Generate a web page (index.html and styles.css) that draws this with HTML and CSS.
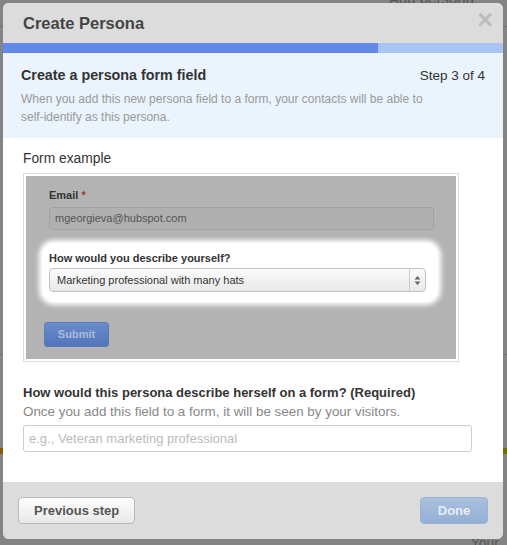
FILE: index.html
```html
<!DOCTYPE html>
<html>
<head>
  <title>Create Persona</title>
  <link rel="stylesheet" href="styles.css">
</head>
<body>

  <div class="backdrop">
    <div class="bg-link">Add persona</div>
    <div class="bg-line line-top"></div>
    <div class="bg-line line-mid"></div>
    <div class="bg-stripe"></div>
    <div class="bg-foot">Your</div>
  </div>

  <div class="modal">
    <div class="modal-header">
      <h2>Create Persona</h2>
      <span class="close">&times;</span>
    </div>

    <div class="progress">
      <div class="progress-fill" style="width: 75%"></div>
    </div>

    <div class="intro">
      <div class="intro-top">
        <h3>Create a persona form field</h3>
        <span class="step">Step 3 of 4</span>
      </div>
      <p>When you add this new persona field to a form, your contacts will be able to <span class="nowrap">self-identify</span> as this persona.</p>
    </div>

    <div class="modal-body">
      <div class="section-label">Form example</div>

      <div class="preview">
        <div class="preview-inner">
          <div class="pv-label">Email <span class="req">*</span></div>
          <div class="pv-input">mgeorgieva@hubspot.com</div>

          <div class="highlight">
            <div class="pv-label">How would you describe yourself?</div>
            <div class="pv-select">
              <span>Marketing professional with many hats</span>
              <span class="arrows">
                <svg width="7" height="11" viewBox="0 0 7 11">
                  <path d="M3.5 1 L6.5 4.5 L0.5 4.5 Z" fill="#666"/>
                  <path d="M3.5 10 L6.5 6.5 L0.5 6.5 Z" fill="#666"/>
                </svg>
              </span>
            </div>
          </div>

          <div class="pv-submit">Submit</div>
        </div>
      </div>

      <div class="question">How would this persona describe herself on a form? (Required)</div>
      <div class="hint">Once you add this field to a form, it will be seen by your visitors.</div>
      <input type="text" class="text-input" placeholder="e.g., Veteran marketing professional">
    </div>

    <div class="modal-footer">
      <button class="btn">Previous step</button>
      <button class="btn btn-done">Done</button>
    </div>
  </div>

</body>
</html>
```

FILE: styles.css
```css
body {
  margin: 0;
  font-family: "Liberation Sans", Arial, sans-serif;
  background: #848484;
  height: 545px;
  overflow: hidden;
  position: relative;
}

/* dimmed page behind the dialog */
.backdrop {
  position: absolute;
  inset: 0;
}

.bg-link {
  position: absolute;
  right: 33px;
  top: -10px;
  font-size: 15px;
  color: #555;
}

.bg-line {
  position: absolute;
  left: 0;
  right: 0;
  height: 1px;
  background: #6f6f6f;
}

.line-top { top: 26px; }
.line-mid { top: 354px; }

.bg-stripe {
  position: absolute;
  left: 0;
  right: 0;
  top: 448px;
  height: 6px;
  background: linear-gradient(to right, #8a5a00 0 50%, #6b7000 50%);
}

.bg-foot {
  position: absolute;
  right: 8px;
  bottom: -6px;
  font-size: 14px;
  color: #555;
}

.modal {
  position: absolute;
  left: 3px;
  top: 3px;
  width: 500px;
  height: 536px;
  background: #fff;
  border-radius: 6px;
  overflow: hidden;
  display: flex;
  flex-direction: column;
}

.modal-header {
  background: #dcdcdc;
  height: 40px;
  display: flex;
  align-items: center;
  justify-content: space-between;
  padding: 0 10px 0 20px;
}

.modal-header h2 {
  margin: 0;
  font-size: 16.5px;
  color: #444;
  font-weight: bold;
}

.close {
  font-size: 27px;
  font-weight: bold;
  color: #bdbdbd;
  line-height: 1;
  margin-top: -5px;
}

.progress {
  height: 10px;
  background: #a9c4f2;
}

.progress-fill {
  height: 100%;
  background: #6389e8;
}

.intro {
  background: #ebf3fc;
  height: 85px;
  padding: 14px 18px 0 18px;
  box-sizing: border-box;
}

.intro-top {
  display: flex;
  justify-content: space-between;
  align-items: baseline;
}

.intro h3 {
  margin: 0;
  font-size: 14.3px;
  color: #333;
}

.step {
  font-size: 13.5px;
  color: #333;
}

.intro p {
  margin: 7px 0 0;
  font-size: 12px;
  line-height: 18px;
  color: #9a9a9a;
  width: 440px;
}

.nowrap {
  white-space: nowrap;
}

.modal-body {
  flex: 1;
  padding: 13px 20px 0 20px;
}

.section-label {
  font-size: 13.8px;
  color: #333;
}

.preview {
  margin-top: 7px;
  width: 436px;
  height: 189px;
  border: 1px solid #ddd;
  padding: 2px;
  box-sizing: border-box;
}

.preview-inner {
  background: #b3b3b3;
  height: 100%;
  padding: 13px 22px 0 23px;
  box-sizing: border-box;
}

.pv-label {
  font-size: 11px;
  font-weight: bold;
  color: #333;
}

.req {
  color: #a33;
}

.pv-input {
  margin-top: 6px;
  height: 23px;
  border: 1px solid #a2a2a2;
  border-radius: 3px;
  background: #b0b0b0;
  font-size: 11px;
  color: #555;
  line-height: 21px;
  padding-left: 5px;
  box-sizing: border-box;
}

.highlight {
  margin: 13px -4px 0 -7px;
  background: #fff;
  border-radius: 12px;
  box-shadow: 0 0 5px 3px #fff;
  padding: 9px 12px 10px 7px;
}

.pv-select {
  margin-top: 4px;
  height: 24px;
  border: 1px solid #c2c2c2;
  border-radius: 4px;
  background: linear-gradient(#fbfbfb, #e9e9e9);
  display: flex;
  align-items: center;
  justify-content: space-between;
  font-size: 11px;
  color: #333;
  box-sizing: border-box;
}

.pv-select span:first-child {
  padding-left: 7px;
}

.arrows {
  width: 15px;
  height: 100%;
  border-left: 1px solid #ccc;
  display: flex;
  align-items: center;
  justify-content: center;
}

.pv-submit {
  margin-top: 20px;
  margin-left: -5px;
  width: 65px;
  height: 25px;
  border-radius: 3px;
  background: linear-gradient(#6a8ccc, #5275ba);
  border: 1px solid #5a7ab8;
  box-sizing: border-box;
  color: #a9bbdc;
  font-size: 11px;
  font-weight: bold;
  text-align: center;
  line-height: 23px;
}

.question {
  margin-top: 23px;
  font-size: 13px;
  font-weight: bold;
  color: #333;
}

.hint {
  margin-top: 4px;
  font-size: 13.4px;
  color: #888;
}

.text-input {
  margin-top: 6px;
  width: 449px;
  height: 27px;
  border: 1px solid #ccc;
  border-radius: 3px;
  padding: 0 5px;
  box-sizing: border-box;
  font-family: "Liberation Sans", Arial, sans-serif;
  font-size: 13px;
}

.text-input::placeholder {
  color: #bbb;
}

.modal-footer {
  background: #dcdcdc;
  height: 57px;
  display: flex;
  justify-content: space-between;
  align-items: flex-start;
  padding: 15px 15px 0 15px;
  box-sizing: border-box;
}

.btn {
  height: 27px;
  padding: 0 15px;
  border: 1px solid #bbb;
  border-radius: 4px;
  background: linear-gradient(#fefefe, #e8e8e8);
  color: #555;
  font-family: "Liberation Sans", Arial, sans-serif;
  font-size: 13px;
  font-weight: bold;
  cursor: pointer;
}

.btn-done {
  width: 68px;
  padding: 0;
  border-color: #9cb3d6;
  background: linear-gradient(#a9c1dc, #94aed7);
  color: #e6edf6;
}
```
